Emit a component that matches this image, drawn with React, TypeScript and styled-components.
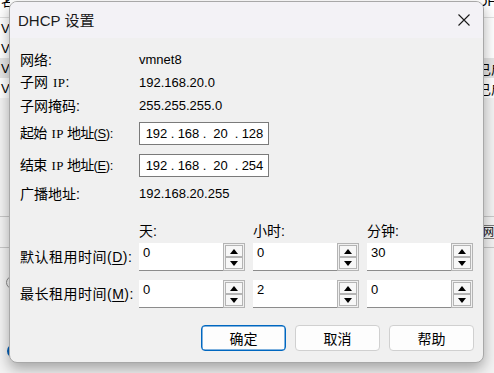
import styled, { createGlobalStyle } from "styled-components";

const GlobalStyle = createGlobalStyle`
  html, body {
    margin: 0;
    padding: 0;
  }
  body {
    width: 494px;
    height: 373px;
    overflow: hidden;
    background: #f0f0f0;
    font-family: "Liberation Sans", "Noto Sans CJK SC", sans-serif;
    color: #000;
  }
`;

const backRows = [
  { name: "VMnet0", state: "" },
  { name: "VMnet1", state: "" },
  { name: "VMnet8", state: "已启用", hi: true },
  { name: "VMnet10", state: "已启用" },
];

const App = () => {
  return (
    <Desktop>
      <GlobalStyle />
      {/* window behind the dialog */}
      <BackWindow>
        <BackHeader>
          <BackLeft>名称</BackLeft>
          <BackRight>DHCP</BackRight>
        </BackHeader>
        {backRows.map((r) => (
          <BackRow key={r.name} $hi={r.hi}>
            <BackLeft>{r.name}</BackLeft>
            <BackRight>{r.state}</BackRight>
          </BackRow>
        ))}
        <BackTabs>
          <BackTab>网络</BackTab>
        </BackTabs>
        <BackRadio />
        <BackRadio $on />
      </BackWindow>

      <Dialog>
        <TitleBar>
          <Title>DHCP 设置</Title>
          <CloseBtn>
            <svg width="12" height="12" viewBox="0 0 12 12">
              <path d="M0.5 0.5 L11.5 11.5 M11.5 0.5 L0.5 11.5" stroke="#1a1a1a" strokeWidth="1.1" />
            </svg>
          </CloseBtn>
        </TitleBar>

        <Body>
          <InfoRow>
            <Label>网络:</Label>
            <Value>vmnet8</Value>
          </InfoRow>
          <InfoRow>
            <Label>
              子网<Latin>IP</Latin>:
            </Label>
            <Value>192.168.20.0</Value>
          </InfoRow>
          <InfoRow>
            <Label>子网掩码:</Label>
            <Value>255.255.255.0</Value>
          </InfoRow>

          <IpRow $top={5}>
            <Label $narrow>
              起始<Latin $after>IP</Latin>地址<Accel>(<u>S</u>):</Accel>
            </Label>
            <IpBox>
              <Octet>192</Octet>
              <Dot>.</Dot>
              <Octet>168</Octet>
              <Dot>.</Dot>
              <Octet>20</Octet>
              <Dot>.</Dot>
              <Octet>128</Octet>
            </IpBox>
          </IpRow>
          <IpRow $top={9}>
            <Label $narrow>
              结束<Latin $after>IP</Latin>地址<Accel>(<u>E</u>):</Accel>
            </Label>
            <IpBox>
              <Octet>192</Octet>
              <Dot>.</Dot>
              <Octet>168</Octet>
              <Dot>.</Dot>
              <Octet>20</Octet>
              <Dot>.</Dot>
              <Octet>254</Octet>
            </IpBox>
          </IpRow>
          <InfoRow style={{ marginTop: 5 }}>
            <Label>广播地址:</Label>
            <Value>192.168.20.255</Value>
          </InfoRow>

          <LeaseHead>
            <span />
            <ColHead>天:</ColHead>
            <ColHead>小时:</ColHead>
            <ColHead>分钟:</ColHead>
          </LeaseHead>

          <LeaseRow $top={2}>
            <LeaseLabel>
              默认租用时间(<u>D</u>):
            </LeaseLabel>
            <SpinField value="0" />
            <SpinField value="0" />
            <SpinField value="30" />
          </LeaseRow>
          <LeaseRow $top={9}>
            <LeaseLabel>
              最长租用时间(<u>M</u>):
            </LeaseLabel>
            <SpinField value="0" />
            <SpinField value="2" />
            <SpinField value="0" />
          </LeaseRow>

          <ButtonRow>
            <Btn $primary>确定</Btn>
            <Btn>取消</Btn>
            <Btn>帮助</Btn>
          </ButtonRow>
        </Body>
      </Dialog>
    </Desktop>
  );
};

const SpinField = ({ value }: { value: string }) => (
  <SpinGroup>
    <NumInput>{value}</NumInput>
    <Spinner>
      <SpinBtn>
        <svg width="8" height="5" viewBox="0 0 8 5">
          <path d="M4 0 L8 5 L0 5 Z" fill="#000" />
        </svg>
      </SpinBtn>
      <SpinBtn>
        <svg width="8" height="5" viewBox="0 0 8 5">
          <path d="M0 0 L8 0 L4 5 Z" fill="#000" />
        </svg>
      </SpinBtn>
    </Spinner>
  </SpinGroup>
);

export default App;

// page + window behind
const Desktop = styled.div`
  position: relative;
  width: 494px;
  height: 373px;
  overflow: hidden;
  background: #f0f0f0;
`;

const BackWindow = styled.div`
  width: 494px;
  height: 373px;
  background: #f3f3f3;
  font-size: 13px;
  display: flex;
  flex-direction: column;
`;

const BackHeader = styled.div`
  height: 17px;
  display: flex;
  justify-content: space-between;
  align-items: flex-start;
  line-height: 14px;
  border-bottom: 1px solid #e0e0e0;
  background: #fff;
  > span {
    margin-top: -5px;
  }
`;

const BackLeft = styled.span`
  width: 9px;
  overflow: hidden;
  white-space: nowrap;
  padding-left: 1px;
`;

const BackRight = styled.span`
  width: 12px;
  overflow: hidden;
  white-space: nowrap;
  text-indent: -4px;
`;

const BackRow = styled.div<{ $hi?: boolean }>`
  height: 20px;
  display: flex;
  justify-content: space-between;
  align-items: center;
  background: ${(p) => (p.$hi ? "#e5e5e5" : "#fff")};
`;

const BackTabs = styled.div`
  margin-top: 118px;
  height: 30px;
  border-top: 1px solid #c8c8c8;
  border-bottom: 1px solid #c8c8c8;
  display: flex;
  justify-content: flex-end;
  align-items: center;
`;

const BackTab = styled.div`
  width: 16px;
  height: 12px;
  border: 1px solid #7a7a7a;
  font-size: 11px;
  line-height: 12px;
  overflow: hidden;
  white-space: nowrap;
  margin-right: -6px;
`;

const BackRadio = styled.div<{ $on?: boolean }>`
  width: ${(p) => (p.$on ? "14px" : "13px")};
  height: ${(p) => (p.$on ? "14px" : "13px")};
  margin-left: ${(p) => (p.$on ? "7px" : "6px")};
  margin-top: ${(p) => (p.$on ? "55px" : "28px")};
  border-radius: 50%;
  box-sizing: border-box;
  border: ${(p) => (p.$on ? "4px solid #005fb8" : "1px solid #8a8a8a")};
  background: ${(p) => (p.$on ? "#fff" : "transparent")};
`;

// dialog
const Dialog = styled.div`
  position: absolute;
  left: 9px;
  top: 1px;
  width: 475px;
  height: 362px;
  box-sizing: border-box;
  border: 1px solid #a8a8a8;
  border-radius: 8px;
  background: #f0f0f0;
  box-shadow: 0 6px 14px rgba(0, 0, 0, 0.32);
  overflow: hidden;
  display: flex;
  flex-direction: column;
`;

const TitleBar = styled.div`
  height: 36px;
  background: #f3f2f6;
  display: flex;
  align-items: center;
  justify-content: space-between;
  padding: 0 13px 0 8px;
`;

const Title = styled.div`
  font-size: 15px;
  color: #1a1a1a;
  margin-top: -1px;
`;

const CloseBtn = styled.div`
  width: 12px;
  height: 12px;
  display: flex;
`;

const Body = styled.div`
  flex: 1;
  padding: 10px 9px 0 10px;
  display: flex;
  flex-direction: column;
  font-size: 13px;
`;

const InfoRow = styled.div`
  height: 23px;
  display: flex;
  align-items: center;
`;

const Label = styled.div<{ $narrow?: boolean }>`
  width: 119px;
  flex: none;
  white-space: nowrap;
  font-size: 14px;
  line-height: 18px;
  color: #000;
  letter-spacing: ${(p) => (p.$narrow ? "-0.8px" : "0")};
  u {
    text-underline-offset: 2px;
  }
`;

// the "IP" in the labels is drawn in a narrow serif face
const Latin = styled.span<{ $after?: boolean }>`
  font-family: "Liberation Serif", serif;
  font-size: 13px;
  letter-spacing: 0.5px;
  margin: 0 ${(p) => (p.$after ? "3px" : "0")} 0 5px;
`;

// mnemonic part "(S):" is set a bit smaller in the IP rows
const Accel = styled.span`
  font-size: 13px;
  letter-spacing: -0.3px;
`;

const LeaseLabel = styled.div`
  white-space: nowrap;
  font-size: 14px;
  line-height: 18px;
  letter-spacing: 0.5px;
  u {
    text-underline-offset: 2px;
  }
`;

const Value = styled.div`
  color: #000;
`;

const IpRow = styled.div<{ $top: number }>`
  margin-top: ${(p) => p.$top}px;
  height: 23px;
  display: flex;
  align-items: center;
`;

const IpBox = styled.div`
  width: 130px;
  height: 23px;
  box-sizing: border-box;
  border: 1px solid #7a7a7a;
  background: #fff;
  display: flex;
  align-items: center;
  padding-left: 3px;
`;

const Octet = styled.span`
  width: 27px;
  text-align: center;
`;

const Dot = styled.span`
  width: 5px;
  text-align: center;
`;

const LeaseHead = styled.div`
  margin-top: 14px;
  height: 22px;
  display: grid;
  grid-template-columns: 119px 106px 106px 106px;
  column-gap: 8px;
  align-items: center;
`;

const ColHead = styled.div`
  margin-left: -8px;
  font-size: 14px;
`;

const LeaseRow = styled.div<{ $top: number }>`
  margin-top: ${(p) => p.$top}px;
  display: grid;
  grid-template-columns: 111px 106px 106px 106px;
  column-gap: 8px;
  align-items: center;
`;

const SpinGroup = styled.div`
  display: flex;
  height: 28px;
`;

const NumInput = styled.div`
  width: 84px;
  box-sizing: border-box;
  background: #fff;
  border-bottom: 1px solid #8c8c8c;
  padding: 2px 4px;
  line-height: 15px;
`;

const Spinner = styled.div`
  width: 22px;
  box-sizing: border-box;
  border: 1px solid #b4b4b4;
  padding: 1px;
  display: flex;
  flex-direction: column;
`;

const SpinBtn = styled.div`
  flex: 1;
  box-sizing: border-box;
  border: 1px solid #b4b4b4;
  background: #f7f7f7;
  display: flex;
  align-items: center;
  justify-content: center;
`;

const ButtonRow = styled.div`
  margin-top: 17px;
  display: flex;
  justify-content: flex-end;
  gap: 9px;
`;

const Btn = styled.div<{ $primary?: boolean }>`
  width: 85px;
  height: 26px;
  box-sizing: border-box;
  border-radius: 4px;
  background: #fdfdfd;
  border: 1px solid ${(p) => (p.$primary ? "#0067c0" : "#d0d0d0")};
  box-shadow: ${(p) => (p.$primary ? "inset 0 0 0 0.5px #0067c0" : "none")};
  font-size: 14px;
  display: flex;
  align-items: center;
  justify-content: center;
  font-family: "Noto Sans CJK SC", sans-serif;
`;
